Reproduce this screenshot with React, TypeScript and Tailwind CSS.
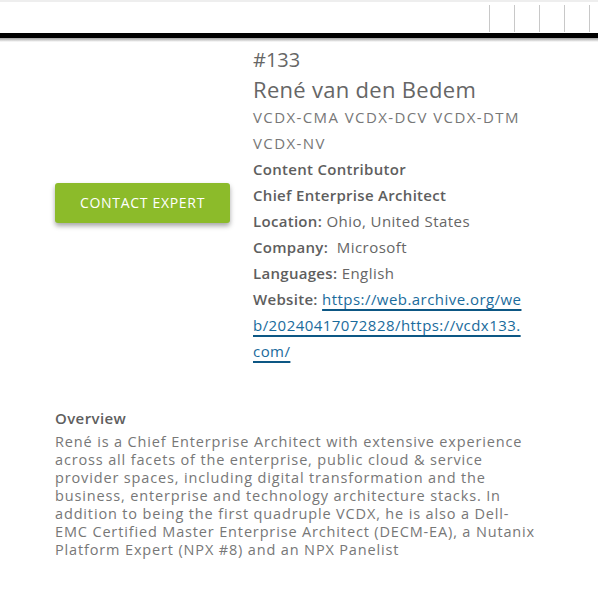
import React from "react";

const font = { fontFamily: '"Open Sans", "Liberation Sans", sans-serif' };

export default function App() {
  return (
    <div className="min-h-screen w-full bg-white text-[#666]" style={font}>
      {/* top nav strip */}
      <div className="h-[2px] bg-[#eeeeee]" />
      <div className="flex h-[31px] justify-end pr-[8px]">
        {[0, 1, 2, 3, 4].map((i) => (
          <div key={i} className="mt-[3px] h-[27px] w-[25px] border-r border-[#c8c8c8]" />
        ))}
      </div>
      <div className="h-[5px] bg-black" />
      <div className="h-[4px] bg-gradient-to-b from-[#a0a0a0] to-white" />

      <div className="flex pt-[4px]">
        <div className="flex w-[253px] shrink-0 items-center pl-[55px]">
          <button className="-mt-[5px] h-[40px] w-[175px] rounded-[3px] bg-[#8cbb2a] text-[14px] tracking-[0.7px] text-white shadow-[0_3px_5px_rgba(0,0,0,0.35)]">
            CONTACT EXPERT
          </button>
        </div>
        <div className="w-[290px] text-[15px] leading-[26px] tracking-[0.45px]">
          <div className="text-[20px] leading-[28px] tracking-normal text-[#666]">#133</div>
          <div className="text-[22px] leading-[30px] tracking-[0.3px] text-[#666]">René van den Bedem</div>
          <div className="tracking-[1.4px] text-[#777]">
            VCDX-CMA VCDX-DCV VCDX-DTM
            <br />
            VCDX-NV
          </div>
          <div className="font-semibold tracking-[0.3px] text-[#5e5e5e]">Content Contributor</div>
          <div className="font-semibold tracking-[0.3px] text-[#5e5e5e]">Chief Enterprise Architect</div>
          <div>
            <span className="font-semibold tracking-[0.3px] text-[#5e5e5e]">Location:</span> Ohio, United States
          </div>
          <div>
            <span className="font-semibold tracking-[0.3px] text-[#5e5e5e]">Company:</span>&nbsp; Microsoft
          </div>
          <div>
            <span className="font-semibold tracking-[0.3px] text-[#5e5e5e]">Languages:</span> English
          </div>
          <div>
            <span className="font-semibold tracking-[0.3px] text-[#5e5e5e]">Website:</span>{" "}
            <a
              href="#"
              className="text-[#1a6b9c] underline decoration-[#0d5784] decoration-2 underline-offset-[4px]"
            >
              https://web.archive.org/we
              <br />
              b/20240417072828/https://vcdx133.
              <br />
              com/
            </a>
          </div>
        </div>
      </div>

      <div className="mt-[44px] pl-[55px]">
        <div className="text-[15px] font-semibold leading-[20px] tracking-[0.4px] text-[#5e5e5e]">Overview</div>
        <p className="mt-[5px] text-[14.5px] leading-[18px] tracking-[0.85px] text-[#777]">
          René is a Chief Enterprise Architect with extensive experience
          <br />
          across all facets of the enterprise, public cloud &amp; service
          <br />
          provider spaces, including digital transformation and the
          <br />
          business, enterprise and technology architecture stacks. In
          <br />
          addition to being the first quadruple VCDX, he is also a Dell-
          <br />
          EMC Certified Master Enterprise Architect (DECM-EA), a Nutanix
          <br />
          Platform Expert (NPX #8) and an NPX Panelist
        </p>
      </div>
    </div>
  );
}
